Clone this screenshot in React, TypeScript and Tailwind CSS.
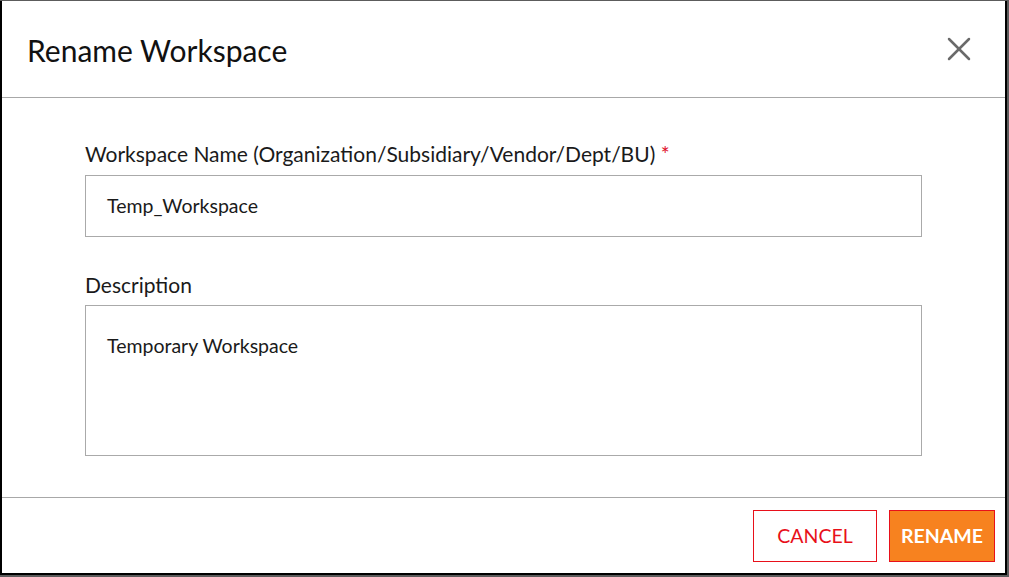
import { X } from "lucide-react";

export default function App() {
  return (
    <div className="w-[1009px] h-[577px] bg-[#5c5c5c] pt-px" style={{ fontFamily: "Lato, 'Noto Sans', sans-serif" }}>
      <div className="w-[1007px] h-[574px] bg-white border-l-2 border-r-2 border-b-2 border-black flex flex-col">
        {/* Header */}
        <div className="h-[97px] flex items-center justify-between pl-[25px] pr-[25px] border-b border-[#a8a8a8] shrink-0">
          <h1 className="text-[30px] text-[#111] leading-none mt-[2px]">Rename Workspace</h1>
          <button className="text-[#6a6a6a] mr-[1px]">
            <X size={40} strokeWidth={1.5} />
          </button>
        </div>

        {/* Body */}
        <div className="px-[83px] pt-[43px] flex flex-col flex-1">
          <label className="text-[21px] text-[#1a1a1a] leading-[26px]">
            Workspace Name (Organization/Subsidiary/Vendor/Dept/BU) <span className="text-[#e0112b]">*</span>
          </label>
          <div className="mt-[8px] h-[62px] border border-[#aaaaaa] flex items-center px-[21px] text-[19.5px] text-[#1a1a1a]">
            Temp_Workspace
          </div>
          <label className="mt-[35px] text-[21px] text-[#1a1a1a] leading-[26px]">Description</label>
          <div className="mt-[7px] h-[151px] border border-[#aaaaaa] px-[21px] pt-[28px] text-[19.5px] text-[#1a1a1a] leading-[24px]">
            Temporary Workspace
          </div>
        </div>

        {/* Footer */}
        <div className="h-[76px] border-t border-[#a8a8a8] flex items-start justify-end gap-[12px] pt-[12px] pr-[10px] shrink-0">
          <button className="w-[124px] h-[52px] border border-[#e8101a] text-[#e8101a] text-[19.5px] bg-white">
            CANCEL
          </button>
          <button className="w-[106px] h-[52px] border border-[#e8101a] bg-[#f7821f] text-white text-[19.5px] font-bold">
            RENAME
          </button>
        </div>
      </div>
    </div>
  );
}
